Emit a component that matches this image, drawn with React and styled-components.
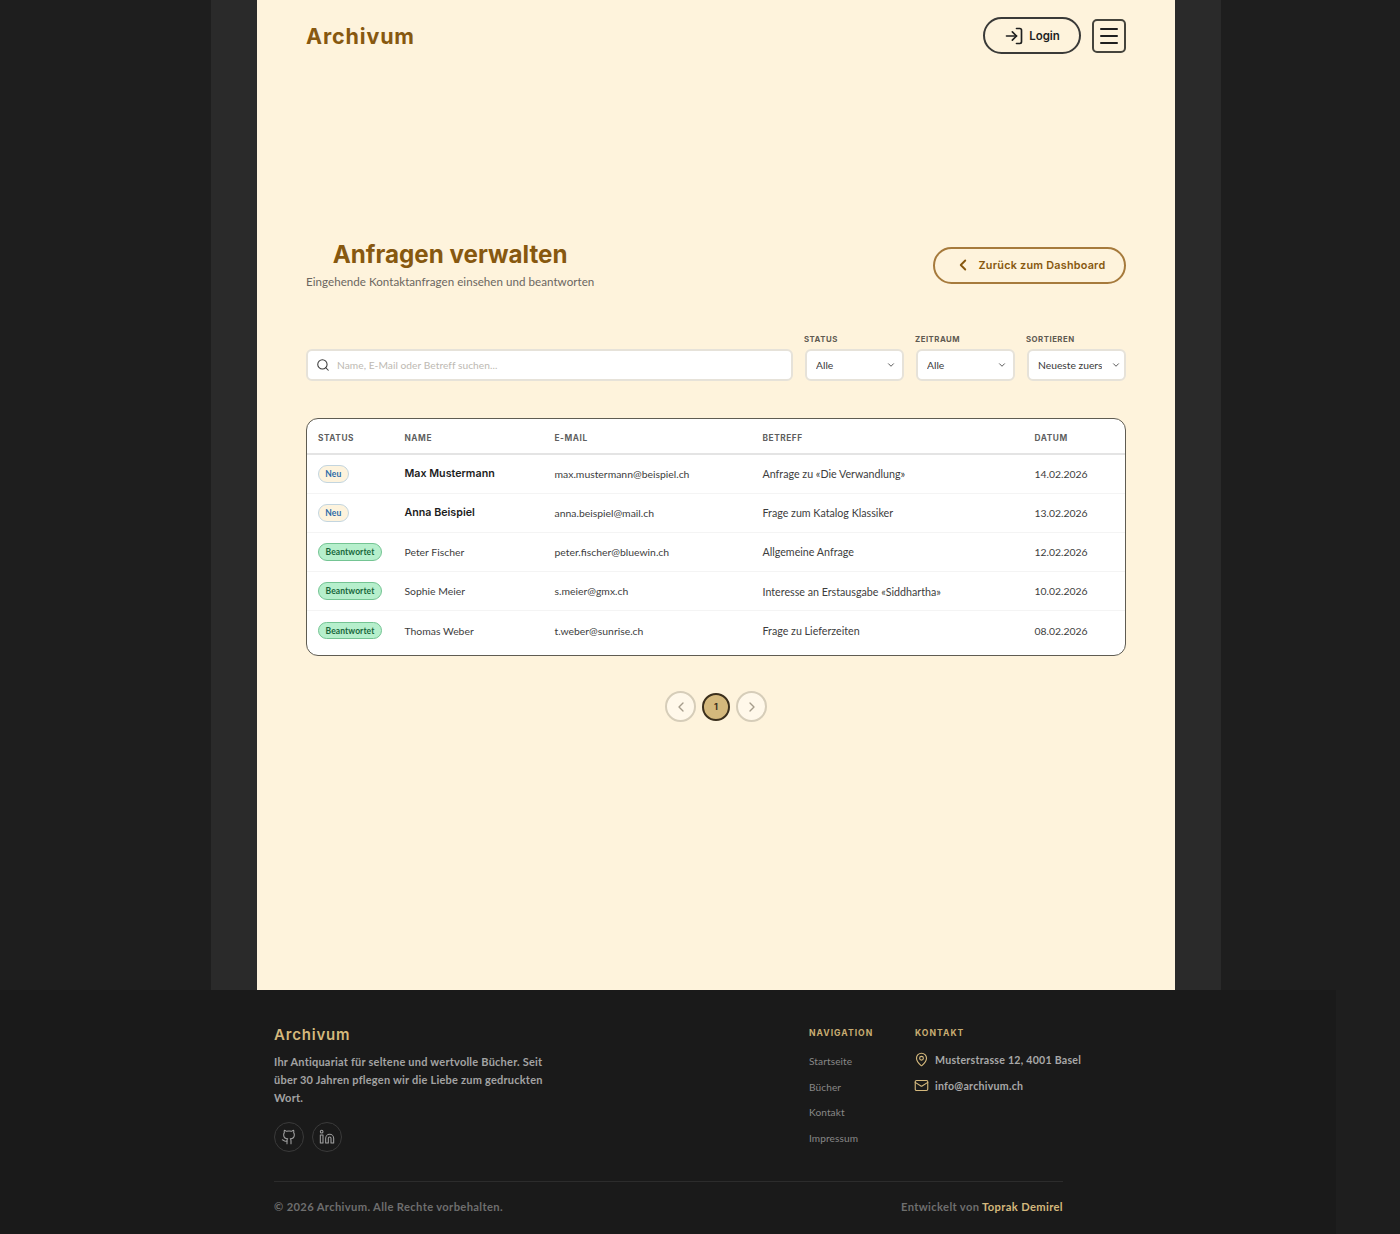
import React from "react";
import styled, { createGlobalStyle } from "styled-components";
import { LogIn, Menu, ChevronLeft, ChevronRight, ChevronDown, Search, Github, Linkedin, MapPin, Mail } from "lucide-react";

const BODY = `"Lato", "Noto Sans", sans-serif`;
const HEAD = `"Inter", "Liberation Sans", sans-serif`;

const Global = createGlobalStyle`
  * { box-sizing: border-box; }
  html, body { margin: 0; padding: 0; background: #1e1e1e; overflow-x: hidden; }
  body { font-family: ${BODY}; width: 1400px; }
`;

const Band = styled.div`
  margin-left: 211px;
  width: 1010px;
  background: #2a2a2a;
  padding: 0 46px 0 45.5px;
`;
const Sheet = styled.main`
  background: #fef3dc;
  height: 990px;
  padding: 0 49px 0 49.5px;
`;
const TopBar = styled.header`
  height: 71px;
  display: flex;
  align-items: center;
`;
const Logo = styled.div`
  font-family: ${HEAD};
  font-weight: 700;
  font-size: 21.5px;
  line-height: 26px;
  letter-spacing: 0.85px;
  color: #87580f;
  margin-right: auto;
`;
const LoginButton = styled.button`
  width: 98px;
  height: 37px;
  border: 2px solid #3a3a38;
  border-radius: 19px;
  background: transparent;
  display: flex;
  align-items: center;
  justify-content: center;
  gap: 5px;
  color: #1f1f1f;
  font-family: ${HEAD};
  font-weight: 600;
  font-size: 11.5px;
  padding: 0;
`;
const MenuButton = styled.button`
  width: 34px;
  height: 34px;
  margin-left: 11px;
  border: 2px solid #45443c;
  border-radius: 5px;
  background: transparent;
  display: flex;
  align-items: center;
  justify-content: center;
  color: #1f1f1f;
  padding: 0;
`;
const PageHead = styled.section`
  margin-top: 168px;
  display: flex;
  justify-content: space-between;
  align-items: center;
`;
const TitleBlock = styled.div`
  text-align: center;
`;
const Title = styled.h1`
  margin: 0 0 2px;
  font-family: ${HEAD};
  font-weight: 700;
  font-size: 24.2px;
  line-height: 32px;
  color: #87580f;
`;
const Subtitle = styled.p`
  margin: 0;
  font-size: 11.6px;
  line-height: 18px;
  color: #6b6660;
  letter-spacing: 0.03px;
`;
const BackButton = styled.button`
  width: 193px;
  height: 37px;
  border: 2px solid #a67a3c;
  border-radius: 19px;
  background: transparent;
  display: flex;
  align-items: center;
  justify-content: center;
  gap: 7px;
  color: #87580f;
  font-family: ${HEAD};
  font-weight: 600;
  font-size: 10.8px;
  letter-spacing: 0.25px;
  padding: 0;
`;
const Filters = styled.section`
  margin-top: 42px;
  display: flex;
  align-items: flex-end;
  gap: 12px;
`;
const SearchBox = styled.label`
  flex: 1;
  height: 32px;
  display: flex;
  align-items: center;
  gap: 7px;
  padding: 0 8px;
  background: #fff;
  border: 2px solid #e6e2d9;
  border-radius: 6px;
  color: #3a3a3a;
`;
const SearchHint = styled.span`
  font-size: 10.2px;
  color: #bdb9b2;
  letter-spacing: 0.05px;
  margin-bottom: 1px;
`;
const FilterField = styled.div`
  width: 99px;
`;
const FilterLabel = styled.div`
  font-family: ${HEAD};
  font-weight: 700;
  font-size: 7.8px;
  line-height: 12px;
  letter-spacing: 0.5px;
  color: #5f5a52;
  text-transform: uppercase;
  margin-bottom: 4px;
  margin-left: -1px;
`;
const Select = styled.div`
  height: 32px;
  display: flex;
  align-items: center;
  justify-content: space-between;
  padding: 0 ${(p) => p.$endGap}px 0 9px;
  background: #fff;
  border: 2px solid #e6e2d9;
  border-radius: 6px;
  font-size: 10.3px;
  color: #3a3a3a;
  white-space: nowrap;
`;
const SelectValue = styled.span`
  display: block;
  overflow: hidden;
  width: 63.5px;
`;
const TableCard = styled.section`
  margin-top: 37px;
  background: #fff;
  border: 1px solid #5f5c52;
  border-radius: 12px;
  padding-bottom: 5.5px;
  overflow: hidden;
`;
const Table = styled.table`
  width: 100%;
  border-collapse: collapse;
  table-layout: fixed;
`;
const HeadCell = styled.th`
  height: 35px;
  padding: 3px 0 0 11px;
  text-align: left;
  font-family: ${HEAD};
  font-weight: 700;
  font-size: 8.3px;
  letter-spacing: 0.55px;
  text-transform: uppercase;
  color: #5f5f5f;
  border-bottom: 2px solid #e4e4e4;
`;
const Row = styled.tr`
  height: 39.2px;
  border-bottom: 1px solid #f4f4f4;
  &:last-child { border-bottom: 0; }
`;
const Cell = styled.td`
  padding: 0 0 0 11px;
  font-size: 10.4px;
  color: #3d3d3d;
`;
const SubjectCell = styled(Cell)`
  font-size: 10.7px;
`;
const NameCell = styled(Cell)`
  font-family: ${(p) => (p.$unread ? HEAD : BODY)};
  font-weight: ${(p) => (p.$unread ? 600 : 400)};
  color: ${(p) => (p.$unread ? "#1c1c1c" : "#3d3d3d")};
  font-size: ${(p) => (p.$unread ? "10.7px" : "10.4px")};
`;
const Badge = styled.span`
  display: inline-flex;
  align-items: center;
  justify-content: center;
  height: 17.5px;
  width: ${(p) => (p.$done ? "64px" : "30.5px")};
  border-radius: 9px;
  border: 1px solid ${(p) => (p.$done ? "#74c493" : "#c3d5df")};
  background: ${(p) => (p.$done ? "#b6efcc" : "#fdf3dd")};
  color: ${(p) => (p.$done ? "#17663a" : "#2a6aa8")};
  font-weight: 700;
  font-size: 8.5px;
  letter-spacing: 0.1px;
  vertical-align: middle;
`;
const Pager = styled.nav`
  margin-top: 35px;
  display: flex;
  justify-content: center;
  align-items: center;
  gap: 6px;
`;
const PageArrow = styled.button`
  width: 31px;
  height: 31px;
  border-radius: 50%;
  border: 2px solid #d6cdb9;
  background: #fff8ea;
  color: #a59c8b;
  display: flex;
  align-items: center;
  justify-content: center;
  padding: 0;
`;
const PageNumber = styled.button`
  width: 28px;
  height: 28px;
  border-radius: 50%;
  border: 2px solid #3b2f1c;
  background: #d4b87c;
  color: #3b2f1c;
  font-family: ${HEAD};
  font-weight: 700;
  font-size: 9px;
  padding: 0;
`;
const Footer = styled.footer`
  width: 1336px;
  height: 244px;
  background: #1a1a1a;
  padding: 0 273px 0 274px;
`;
const FooterTop = styled.div`
  height: 192px;
  display: flex;
  border-bottom: 1px solid #2c2c2c;
`;
const FooterBrand = styled.div`
  flex: none;
  width: 535px;
  padding-top: 35px;
`;
const FooterLogo = styled.div`
  font-family: ${HEAD};
  font-weight: 600;
  font-size: 15px;
  line-height: 20px;
  letter-spacing: 0.8px;
  color: #d4b87c;
`;
const FooterText = styled.p`
  margin: 8px 0 0;
  width: 275px;
  font-weight: 700;
  font-size: 11px;
  line-height: 18px;
  letter-spacing: 0.22px;
  color: #a3a3a3;
`;
const Socials = styled.div`
  margin-top: 15px;
  display: flex;
  gap: 8px;
`;
const SocialLink = styled.a`
  width: 30px;
  height: 30px;
  border-radius: 50%;
  border: 1px solid #3a3a3a;
  display: flex;
  align-items: center;
  justify-content: center;
  color: #9f9f9f;
`;
const NavColumn = styled.nav`
  flex: none;
  width: 106px;
  padding-top: 36px;
`;
const ContactColumn = styled.div`
  flex: none;
  padding-top: 36px;
`;
const ColumnTitle = styled.div`
  font-family: ${HEAD};
  font-weight: 700;
  font-size: 8.6px;
  line-height: 14px;
  letter-spacing: 1px;
  text-transform: uppercase;
  color: #c9ad72;
`;
const NavList = styled.div`
  margin-top: 13px;
  display: flex;
  flex-direction: column;
  gap: 9.6px;
`;
const NavLink = styled.a`
  font-size: 10.1px;
  line-height: 16px;
  color: #888;
  letter-spacing: 0.1px;
`;
const ContactList = styled.div`
  margin-top: 11.5px;
  display: flex;
  flex-direction: column;
  gap: 10px;
`;
const ContactRow = styled.div`
  display: flex;
  align-items: center;
  gap: 6px;
  height: 16px;
  white-space: nowrap;
  font-weight: 700;
  font-size: 10.6px;
  letter-spacing: 0.25px;
  color: #a8a8a8;
  & > svg { color: #d4b87c; margin-left: -1px; }
`;
const FooterBottom = styled.div`
  height: 51px;
  padding-bottom: 2px;
  display: flex;
  align-items: center;
  justify-content: space-between;
  font-weight: 700;
  font-size: 11.2px;
  letter-spacing: 0.35px;
  color: #6e6e6e;
`;
const Author = styled.span`
  color: #d4b87c;
`;

const rows = [
  ["Neu", "Max Mustermann", "max.mustermann@beispiel.ch", "Anfrage zu «Die Verwandlung»", "14.02.2026"],
  ["Neu", "Anna Beispiel", "anna.beispiel@mail.ch", "Frage zum Katalog Klassiker", "13.02.2026"],
  ["Beantwortet", "Peter Fischer", "peter.fischer@bluewin.ch", "Allgemeine Anfrage", "12.02.2026"],
  ["Beantwortet", "Sophie Meier", "s.meier@gmx.ch", "Interesse an Erstausgabe «Siddhartha»", "10.02.2026"],
  ["Beantwortet", "Thomas Weber", "t.weber@sunrise.ch", "Frage zu Lieferzeiten", "08.02.2026"],
];
const filters = [["Status", "Alle", 6], ["Zeitraum", "Alle", 6], ["Sortieren", "Neueste zuerst", 3.5]];
const columns = [
  ["Status", 86.5], ["Name", 150], ["E-Mail", 208], ["Betreff", 272], ["Datum", 101.5],
];

export default function App() {
  return (
    <>
      <Global />
      <Band>
        <Sheet>
          <TopBar>
            <Logo>Archivum</Logo>
            <LoginButton><LogIn size={20} strokeWidth={2} />Login</LoginButton>
            <MenuButton><Menu size={24} strokeWidth={2} /></MenuButton>
          </TopBar>
          <PageHead>
            <TitleBlock>
              <Title>Anfragen verwalten</Title>
              <Subtitle>Eingehende Kontaktanfragen einsehen und beantworten</Subtitle>
            </TitleBlock>
            <BackButton><ChevronLeft size={18} strokeWidth={2.5} />Zurück zum Dashboard</BackButton>
          </PageHead>
          <Filters>
            <SearchBox>
              <Search size={14} strokeWidth={1.8} />
              <SearchHint>Name, E-Mail oder Betreff suchen...</SearchHint>
            </SearchBox>
            {filters.map(([label, value, endGap]) => (
              <FilterField key={label}>
                <FilterLabel>{label}</FilterLabel>
                <Select $endGap={endGap}>
                  <SelectValue>{value}</SelectValue>
                  <ChevronDown size={10} strokeWidth={2} />
                </Select>
              </FilterField>
            ))}
          </Filters>
          <TableCard>
            <Table>
              <colgroup>
                {columns.map(([label, width]) => <col key={label} width={width} />)}
              </colgroup>
              <thead>
                <tr>{columns.map(([label]) => <HeadCell key={label}>{label}</HeadCell>)}</tr>
              </thead>
              <tbody>
                {rows.map(([status, name, mail, subject, date]) => (
                  <Row key={name}>
                    <Cell><Badge $done={status !== "Neu"}>{status}</Badge></Cell>
                    <NameCell $unread={status === "Neu"}>{name}</NameCell>
                    <Cell>{mail}</Cell>
                    <SubjectCell>{subject}</SubjectCell>
                    <Cell>{date}</Cell>
                  </Row>
                ))}
              </tbody>
            </Table>
          </TableCard>
          <Pager>
            <PageArrow><ChevronLeft size={16} strokeWidth={2} /></PageArrow>
            <PageNumber>1</PageNumber>
            <PageArrow><ChevronRight size={16} strokeWidth={2} /></PageArrow>
          </Pager>
        </Sheet>
      </Band>
      <Footer>
        <FooterTop>
          <FooterBrand>
            <FooterLogo>Archivum</FooterLogo>
            <FooterText>Ihr Antiquariat für seltene und wertvolle Bücher. Seit über 30 Jahren pflegen wir die Liebe zum gedruckten Wort.</FooterText>
            <Socials>
              <SocialLink><Github size={16} strokeWidth={1.6} /></SocialLink>
              <SocialLink><Linkedin size={16} strokeWidth={1.6} /></SocialLink>
            </Socials>
          </FooterBrand>
          <NavColumn>
            <ColumnTitle>Navigation</ColumnTitle>
            <NavList>
              <NavLink>Startseite</NavLink>
              <NavLink>Bücher</NavLink>
              <NavLink>Kontakt</NavLink>
              <NavLink>Impressum</NavLink>
            </NavList>
          </NavColumn>
          <ContactColumn>
            <ColumnTitle>Kontakt</ColumnTitle>
            <ContactList>
              <ContactRow><MapPin size={15} strokeWidth={1.8} />Musterstrasse 12, 4001 Basel</ContactRow>
              <ContactRow><Mail size={15} strokeWidth={1.8} />info@archivum.ch</ContactRow>
            </ContactList>
          </ContactColumn>
        </FooterTop>
        <FooterBottom>
          <span>© 2026 Archivum. Alle Rechte vorbehalten.</span>
          <span>Entwickelt von <Author>Toprak Demirel</Author></span>
        </FooterBottom>
      </Footer>
    </>
  );
}
